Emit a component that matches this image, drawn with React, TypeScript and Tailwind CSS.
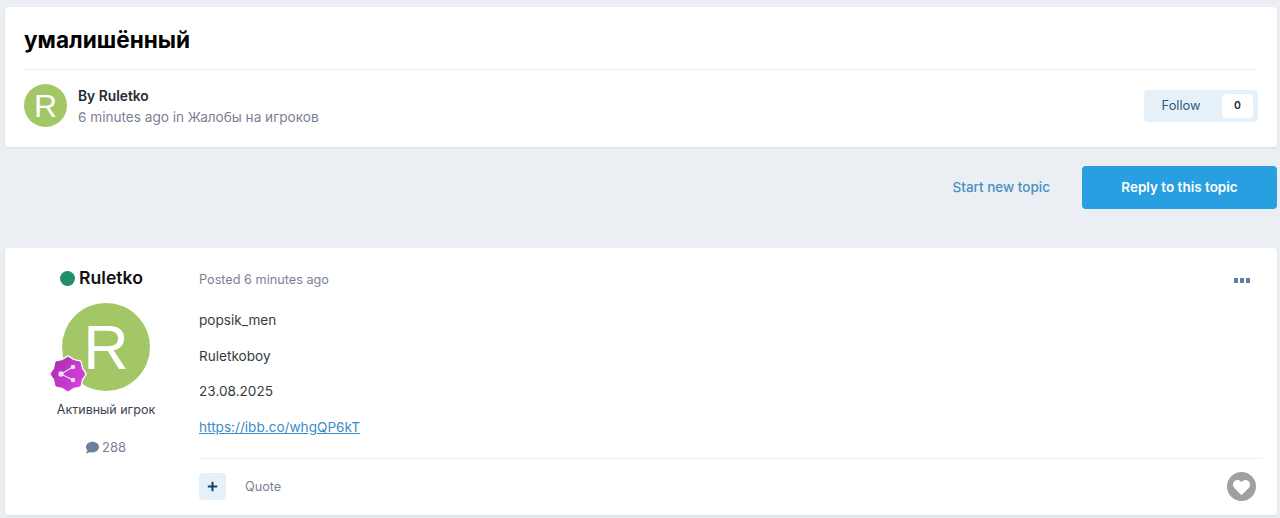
import { FaComment, FaHeart, FaPlus } from "react-icons/fa";

function Avatar({ size, text }: { size: string; text: string }) {
	return (
		<div className={`flex items-center justify-center rounded-full bg-[#a3c766] text-white font-['Liberation_Sans',sans-serif] ${size} ${text}`}>
			R
		</div>
	);
}

const badgePoints =
	"19,2 24.55,5.6 31,7 32.4,13.45 36,19 32.4,24.55 31,31 24.55,32.4 19,36 13.45,32.4 7,31 5.6,24.55 2,19 5.6,13.45 7,7 13.45,5.6";

function Badge() {
	return (
		<svg viewBox="0 0 38 38" className="absolute left-[-13px] top-[52px] h-[38px] w-[38px]">
			<defs>
				<linearGradient id="badge" x1="0" y1="0" x2="1" y2="0.6">
					<stop offset="0" stopColor="#a42ea8" />
					<stop offset="1" stopColor="#d63fe0" />
				</linearGradient>
			</defs>
			<polygon points={badgePoints} fill="#fff" stroke="#fff" strokeWidth="3.5" strokeLinejoin="round" />
			<polygon points={badgePoints} fill="url(#badge)" stroke="url(#badge)" strokeWidth="1" strokeLinejoin="round" />
			<g stroke="#f6dcf8" strokeWidth="1.2">
				<line x1="12" y1="19" x2="24" y2="12" />
				<line x1="12" y1="19" x2="24" y2="25" />
			</g>
			<g fill="#f6dcf8">
				<circle cx="12" cy="19" r="2.7" />
				<circle cx="24" cy="12" r="2.3" />
				<circle cx="24" cy="25" r="2.3" />
			</g>
		</svg>
	);
}

export default function App() {
	return (
		<div className="min-h-[518px] bg-[#ebeef3] pl-[5px] pr-[3px] pt-[7px] font-['Inter',sans-serif] overflow-hidden">
			<div className="h-[140px] rounded bg-white shadow-[0_1px_3px_rgba(0,0,0,0.08)] px-[19px]">
				<h1 className="h-[63px] border-b border-[#eceef1] pt-[16px] text-[22.6px] leading-[34px] font-bold text-black">
					умалишённый
				</h1>
				<div className="flex items-center justify-between pt-[14px]">
					<div className="flex items-center gap-[11px]">
						<Avatar size="w-[43px] h-[43px]" text="text-[32px]" />
						<div>
							<div className="pt-[1px] text-[13.8px] leading-[20px] font-semibold text-[#272a34]">By Ruletko</div>
							<div className="mt-[1px] text-[13.6px] leading-[20px] text-[#7a7f96]">
								6 minutes ago in Жалобы на игроков
							</div>
						</div>
					</div>
					<div className="flex h-[32px] w-[114px] items-center rounded bg-[#e6f0f9] pr-[5px]">
						<span className="flex-1 pr-[4px] pt-[1px] text-center text-[12.8px] text-[#2c5a80]">Follow</span>
						<span className="flex h-[24px] w-[31px] items-center justify-center rounded bg-white text-[10.5px] font-semibold text-[#272a34]">
							0
						</span>
					</div>
				</div>
			</div>

			<div className="mt-[19px] flex items-center justify-end">
				<a className="mr-[32px] text-[13.5px] font-medium text-[#4a90bd]">Start new topic</a>
				<a className="flex h-[43px] w-[195px] items-center justify-center rounded bg-[#279fe0] text-[13.5px] font-semibold text-white">
					Reply to this topic
				</a>
			</div>

			<div className="mt-[39px] flex h-[267px] rounded bg-white shadow-[0_1px_3px_rgba(0,0,0,0.08)]">
				<div className="flex w-[194px] shrink-0 flex-col items-center pl-[8px]">
					<div className="mt-[19px] flex items-center gap-[4px] pr-[9px]">
						<span className="h-[15px] w-[15px] rounded-full bg-[#1f9068]" />
						<span className="text-[17.6px] leading-[22px] font-semibold text-[#111111]">Ruletko</span>
					</div>
					<div className="relative mt-[14px]">
						<Avatar size="w-[88px] h-[88px]" text="text-[63px]" />
						<Badge />
					</div>
					<div className="mt-[10px] text-[12.5px] leading-[18px] text-[#3d4150]">Активный игрок</div>
					<div className="mt-[19px] flex items-center gap-[3px] text-[13px] leading-[18px] text-[#7a7f96]">
						<FaComment className="h-[13px] w-[13px] text-[#6d7f99]" />
						288
					</div>
				</div>
				<div className="flex flex-1 flex-col pr-[15px]">
					<div className="flex items-center justify-between pt-[23px]">
						<span className="text-[12.7px] leading-[18px] text-[#7a7f96]">Posted 6 minutes ago</span>
						<span className="mr-[12px] flex gap-[2px]">
							<i className="h-[5px] w-[4px] bg-[#5f7ea3]" />
							<i className="h-[5px] w-[4px] bg-[#5f7ea3]" />
							<i className="h-[5px] w-[4px] bg-[#5f7ea3]" />
						</span>
					</div>
					<div className="mt-[21px] flex flex-col gap-[15px] text-[13.6px] leading-[20.5px] text-[#353c41]">
						<p>popsik_men</p>
						<p>Ruletkoboy</p>
						<p>23.08.2025</p>
						<a className="text-[#3a8cc9] underline">https://ibb.co/whgQP6kT</a>
					</div>
					<div className="mt-[21px] flex flex-1 items-center justify-between border-t border-[#eceef1] pb-[1px]">
						<div className="flex items-center gap-[19px]">
							<span className="flex h-[27px] w-[27px] items-center justify-center rounded bg-[#e6f0f9]">
								<FaPlus className="h-[11px] w-[11px] text-[#10456e]" />
							</span>
							<span className="text-[12.7px] text-[#7a7f96]">Quote</span>
						</div>
						<span className="mr-[6px] flex h-[29px] w-[29px] items-center justify-center rounded-full bg-[#a0a0a0]">
							<FaHeart className="mt-[1px] h-[17px] w-[17px] text-white" />
						</span>
					</div>
				</div>
			</div>
		</div>
	);
}
